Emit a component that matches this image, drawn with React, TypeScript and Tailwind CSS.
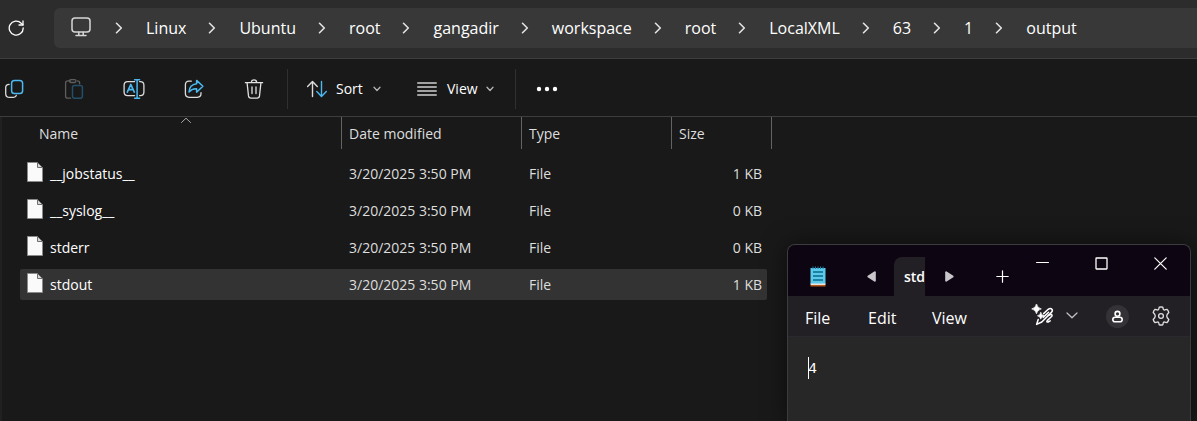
import React from "react";

const crumbs = ["Linux", "Ubuntu", "root", "gangadir", "workspace", "root", "LocalXML", "63", "1", "output"];

const files = [
  { name: "__jobstatus__", date: "3/20/2025 3:50 PM", type: "File", size: "1 KB", selected: false },
  { name: "__syslog__", date: "3/20/2025 3:50 PM", type: "File", size: "0 KB", selected: false },
  { name: "stderr", date: "3/20/2025 3:50 PM", type: "File", size: "0 KB", selected: false },
  { name: "stdout", date: "3/20/2025 3:50 PM", type: "File", size: "1 KB", selected: true },
];

type IconProps = { w: number; h: number; className?: string; sw?: number; children: React.ReactNode };

function Icon({ w, h, className = "", sw = 1.3, children }: IconProps) {
  return (
    <svg
      width={w}
      height={h}
      viewBox={`0 0 ${w} ${h}`}
      fill="none"
      stroke="currentColor"
      strokeWidth={sw}
      strokeLinecap="round"
      strokeLinejoin="round"
      className={`shrink-0 ${className}`}
      aria-hidden="true"
    >
      {children}
    </svg>
  );
}

const BLUE = "#4cb8f0";

function RefreshIcon() {
  return (
    <Icon w={18} h={18} className="text-white" sw={1.3}>
      <path d="M15.2 9A7 7 0 1 1 13.2 4.2L15 5.9" />
      <path d="M15 2V6H11" />
    </Icon>
  );
}

function MonitorIcon() {
  return (
    <Icon w={20} h={20} className="text-[#d6d6d6]" sw={1.5}>
      <rect x="1" y="1" width="18" height="14" rx="3" />
      <path d="M7.8 15.2v3M12.2 15.2v3M5 18.4h10" />
    </Icon>
  );
}

function ChevronRight() {
  return (
    <Icon w={8} h={12} className="text-[#e4e4e4]" sw={1.6}>
      <path d="M1.5 1.3L6.3 6L1.5 10.7" />
    </Icon>
  );
}

function ChevronDown() {
  return (
    <Icon w={8} h={6} className="text-[#b5b5b5]" sw={1.3}>
      <path d="M1 1.3L4 4.5L7 1.3" />
    </Icon>
  );
}

function CopyIcon() {
  return (
    <Icon w={20} h={20}>
      <path d="M5.2 5.3C3 5.3 1.7 6.2 1.7 8.6V14.4C1.7 17 3.1 18.4 5.7 18.4H9C11 18.4 11.9 17.8 12.3 16.4" stroke="#dcdcdc" />
      <rect x="7.6" y="1.4" width="11" height="13.2" rx="2.8" stroke={BLUE} strokeWidth="1.5" />
    </Icon>
  );
}

function PasteIcon() {
  return (
    <Icon w={20} h={20}>
      <path d="M6.5 1.9H3.7C2.3 1.9 1.6 2.7 1.6 4V17.2C1.6 18.5 2.3 19.2 3.7 19.2H6.6M13.5 1.9C14.9 1.9 15.6 2.6 15.6 4V4.8" stroke="#5d5d5d" />
      <rect x="5.4" y="0.7" width="6.6" height="2.8" rx="1.4" stroke="#5d5d5d" />
      <rect x="8.5" y="6.6" width="9.9" height="12.7" rx="2" stroke="#235069" strokeWidth="1.5" />
    </Icon>
  );
}

function RenameIcon() {
  return (
    <Icon w={22} h={20}>
      <path d="M11.6 2.6H4.7C2.4 2.6 1.1 3.9 1.1 6.2V13C1.1 15.3 2.4 16.6 4.7 16.6H11.6M16.6 2.6H17.3C19.6 2.6 20.9 3.9 20.9 6.2V13C20.9 15.3 19.6 16.6 17.3 16.6H16.6" stroke="#dcdcdc" />
      <path d="M4.3 13.1L7.8 5.4L11.3 13.1M5.6 10.6H10" stroke={BLUE} strokeWidth="1.6" />
      <path d="M14.1 0.9V19.1M11.6 0.8H16.6M11.6 19.2H16.6" stroke={BLUE} strokeWidth="1.5" />
    </Icon>
  );
}

function ShareIcon() {
  return (
    <Icon w={20} h={20}>
      <path d="M7.3 2.2H5C2.6 2.2 1.4 3.5 1.4 5.8V14.6C1.4 17 2.6 18.3 5 18.3H13.4C15.8 18.3 17 17 17 14.6V13.6" stroke="#dcdcdc" />
      <path d="M12.6 1.4L18.9 7.3L12.6 13.1V9.8C9.3 9.6 7 10.5 5 13C5.2 8.4 7.9 5.2 12.6 4.7Z" stroke={BLUE} strokeWidth="1.5" />
    </Icon>
  );
}

function TrashIcon() {
  return (
    <Icon w={20} h={20} className="text-[#e2e2e2]">
      <path d="M1.4 3.7H18.6M7.4 3.4C7.4 1.7 8.4 0.9 10 0.9S12.6 1.7 12.6 3.4M3.1 4L4.5 16.9C4.7 18.4 5.4 19.1 6.9 19.1H13.1C14.6 19.1 15.3 18.4 15.5 16.9L16.9 4M8 8V14.6M12 8V14.6" />
    </Icon>
  );
}

function SortIcon() {
  return (
    <Icon w={22} h={18} sw={1.4}>
      <path d="M6.5 16.6V1.6M1.6 6.4L6.5 1.5L11.3 6.4" stroke="#dcdcdc" />
      <path d="M15.5 1.4V16.4M10.8 11.6L15.5 16.5L20.3 11.6" stroke={BLUE} />
    </Icon>
  );
}

function LinesIcon() {
  return (
    <Icon w={20} h={14} className="text-[#d0d0d0]">
      <path d="M0.7 1H19.3M0.7 5H19.3M0.7 9H19.3M0.7 13H19.3" />
    </Icon>
  );
}

function FileIcon() {
  return (
    <svg width="16" height="20" viewBox="0 0 16 20" className="mb-[3px] shrink-0" aria-hidden="true">
      <path d="M0.5 0.5H10.5L15.5 5.5V19.5H0.5Z" fill="#fafafa" stroke="#8a8a8a" />
      <path d="M10.5 0.5V5.5H15.5Z" fill="#d8d8d8" stroke="#6f6f6f" />
    </svg>
  );
}

function NotepadIcon() {
  return (
    <svg width="16" height="21" viewBox="0 0 16 21" className="shrink-0" aria-hidden="true">
      <path d="M0.5 2H15.5V18H0.5Z" fill="#5cc8ea" />
      <path d="M0.5 17.5H15.5V19H0.5Z" fill="#e9e4de" />
      <path d="M0.5 19H15.5V20.5H0.5Z" fill="#b4581a" />
      <path d="M3 0.5V3M5.5 0.5V3M8 0.5V3M10.5 0.5V3M13 0.5V3" stroke="#1b7fa6" strokeWidth="1" />
      <path d="M3 6H13M3 10H13M3 14H13" stroke="#08698c" strokeWidth="1.6" />
    </svg>
  );
}

function RewriteIcon() {
  return (
    <Icon w={24} h={24} className="text-white" sw={1.5}>
      <path d="M5.5 0Q6.2 4.1 10.3 4.9Q6.2 5.7 5.5 9.8Q4.8 5.7 0.7 4.9Q4.8 4.1 5.5 0Z" fill="currentColor" stroke="currentColor" strokeWidth="0.7" />
      <path d="M9.8 8.4Q10.3 11.2 13.2 11.8Q10.3 12.4 9.8 15.2Q9.3 12.4 6.4 11.8Q9.3 11.2 9.8 8.4Z" fill="currentColor" stroke="currentColor" strokeWidth="0.6" />
      <path d="M12.6 9.6L17.2 5.3C18.6 4.2 20.2 4.3 20.9 5.2C21.7 6.2 21.4 7.4 20.4 8.4L10.8 18L5.6 20.4L7.2 15.4" />
      <path d="M12.2 13.4L17.6 8.2M17.2 11.5L19.6 10.6C21 10.3 21.6 11.4 20.6 12.5L16.2 16.6C15.4 17.6 16 18.4 17.2 18L19.2 16.9" />
    </Icon>
  );
}

function GearIcon() {
  return (
    <Icon w={20} h={20} className="text-[#dedede]" sw={1.3}>
      <path d="M8.2 1.2Q10 0.8 11.8 1.2L12.3 3.3Q12.7 4.2 13.8 3.9L15.9 3.3Q17.3 4.6 17.8 6.5L16.3 8.2Q15.2 10 16.3 11.8L17.8 13.5Q17.3 15.4 15.9 16.7L13.8 16.1Q12.7 15.8 12.3 16.7L11.8 18.8Q10 19.2 8.2 18.8L7.7 16.7Q7.3 15.8 6.2 16.1L4.1 16.7Q2.7 15.4 2.2 13.5L3.7 11.8Q4.8 10 3.7 8.2L2.2 6.5Q2.7 4.6 4.1 3.3L6.2 3.9Q7.3 4.2 7.7 3.3Z" />
      <circle cx="10" cy="10" r="2.4" />
    </Icon>
  );
}

function AddressBar() {
  return (
    <header className="flex h-[59px] items-start border-b border-[#3d3d3d] bg-[#2c2c2c] pt-2">
      <button aria-label="Refresh" className="flex h-10 w-[54px] items-center pl-2">
        <RefreshIcon />
      </button>
      <nav aria-label="Path" className="flex h-10 flex-1 items-center rounded-l-md bg-[#383838] pl-[17px]">
        <button aria-label="This PC" className="mb-[2px]">
          <MonitorIcon />
        </button>
        <ol className="flex items-center pl-[2px]">
          {crumbs.map((c, i) => (
            <li key={i} className="flex items-center">
              <span className="pr-[23px] pl-[22px]">
                <ChevronRight />
              </span>
              <a href="#" className="text-base leading-6 text-white">
                {c}
              </a>
            </li>
          ))}
        </ol>
      </nav>
    </header>
  );
}

function CommandBar() {
  const tools = [
    { label: "Copy", icon: <CopyIcon /> },
    { label: "Paste", icon: <PasteIcon /> },
    { label: "Rename", icon: <RenameIcon /> },
    { label: "Share", icon: <ShareIcon /> },
    { label: "Delete", icon: <TrashIcon /> },
  ];
  return (
    <div role="toolbar" aria-label="Commands" className="flex h-[58px] items-center border-b border-[#3d3d3d] pt-[3px] text-sm text-white">
      <div className="flex gap-8">
        {tools.map((t) => (
          <button key={t.label} aria-label={t.label} className="flex h-8 w-7 items-center justify-center">
            {t.icon}
          </button>
        ))}
      </div>
      <div className="ml-[19px] h-10 w-px bg-[#303030]" />
      <button className="ml-[18px] flex w-[75px] items-center">
        <SortIcon />
        <span className="ml-2 flex-1 text-left">Sort</span>
        <ChevronDown />
      </button>
      <button className="ml-9 flex w-[77px] items-center">
        <LinesIcon />
        <span className="ml-[10px] flex-1 text-left">View</span>
        <ChevronDown />
      </button>
      <div className="ml-[21px] h-10 w-px bg-[#303030]" />
      <button aria-label="See more" className="ml-5">
        <svg width="22" height="6" viewBox="0 0 22 6" fill="#fff" aria-hidden="true">
          <circle cx="3" cy="3" r="2.2" />
          <circle cx="11" cy="3" r="2.2" />
          <circle cx="19" cy="3" r="2.2" />
        </svg>
      </button>
    </div>
  );
}

function FileTable() {
  const head = "flex h-8 items-center border-r border-[#636363] pt-px font-normal";
  const cell = "flex h-[31px] items-center";
  return (
    <table className="w-[772px] table-fixed border-collapse text-left text-sm text-[#dedede]">
      <colgroup>
        <col className="w-[342px]" />
        <col className="w-[180px]" />
        <col className="w-[150px]" />
        <col className="w-[100px]" />
      </colgroup>
      <thead>
        <tr className="h-[38px] align-top">
          <th className="relative p-0">
            <div className={`${head} pl-[39px]`}>Name</div>
            <Icon w={12} h={7} className="absolute top-0 left-[180px] text-[#a8a8a8]" sw={1}>
              <path d="M1.5 5.5L6 1.2L10.5 5.5" />
            </Icon>
          </th>
          <th className="p-0">
            <div className={`${head} pl-[7px]`}>Date modified</div>
          </th>
          <th className="p-0">
            <div className={`${head} pl-[7px]`}>Type</div>
          </th>
          <th className="p-0">
            <div className={`${head} pl-[7px]`}>Size</div>
          </th>
        </tr>
      </thead>
      <tbody>
        {files.map((f) => {
          const bg = f.selected ? "bg-[#333333]" : "";
          return (
            <tr key={f.name} className="h-[37px]">
              <td className="p-0 pl-5">
                <div className={`${cell} ${bg} gap-[7px] rounded-l-xs pl-[7px] text-white`}>
                  <FileIcon />
                  {f.name}
                </div>
              </td>
              <td className="p-0">
                <div className={`${cell} ${bg} pl-[7px]`}>{f.date}</div>
              </td>
              <td className="p-0">
                <div className={`${cell} ${bg} pl-[7px]`}>{f.type}</div>
              </td>
              <td className="p-0 pr-[5px]">
                <div className={`${cell} ${bg} justify-end rounded-r-xs pr-[5px]`}>{f.size}</div>
              </td>
            </tr>
          );
        })}
      </tbody>
    </table>
  );
}

function Notepad() {
  const winButton = "flex h-9 w-[59px] items-center justify-center";
  return (
    <section
      aria-label="Notepad"
      className="absolute top-[244px] right-1.5 bottom-0 flex w-[404px] flex-col overflow-hidden rounded-t-lg border border-b-0 border-[#3c3c3e] bg-[#272727] text-white shadow-[0_0_24px_rgba(0,0,0,0.5)]"
    >
      <div className="flex h-[51px] bg-[#0d0512]">
        <div className="flex w-[60px] items-center pt-3 pl-[22px]">
          <NotepadIcon />
        </div>
        <button aria-label="Previous tab" className="flex w-[46px] items-center justify-center pt-3">
          <svg width="9" height="11" viewBox="0 0 9 11" fill="#c9c6cb" aria-hidden="true">
            <path d="M8.8 1.2V9.8Q8.6 11 7.3 10.6L0.7 6.2Q0 5.5 0.7 4.8L7.3 0.4Q8.6 0 8.8 1.2Z" />
          </svg>
        </button>
        <button className="mt-3 w-[31px] overflow-hidden rounded-tl-lg bg-[#221f25] pl-[10px] text-left text-sm font-semibold whitespace-nowrap">
          std
        </button>
        <button aria-label="Next tab" className="flex w-12 items-center justify-center pt-3">
          <svg width="9" height="11" viewBox="0 0 9 11" fill="#c9c6cb" aria-hidden="true">
            <path d="M0.2 1.2V9.8Q0.4 11 1.7 10.6L8.3 6.2Q9 5.5 8.3 4.8L1.7 0.4Q0.4 0 0.2 1.2Z" />
          </svg>
        </button>
        <button aria-label="New tab" className="ml-[18px] flex w-[22px] items-center justify-center pt-3">
          <Icon w={13} h={13} sw={1.2}>
            <path d="M6.5 0.8V12.2M0.8 6.5H12.2" />
          </Icon>
        </button>
        <div className="ml-auto flex">
          <button aria-label="Minimize" className={winButton}>
            <Icon w={13} h={13} sw={1}>
              <path d="M0.5 5.5H12.5" />
            </Icon>
          </button>
          <button aria-label="Maximize" className={winButton}>
            <Icon w={13} h={13} sw={1.3}>
              <rect x="1" y="1" width="11" height="11" rx="0.5" />
            </Icon>
          </button>
          <button aria-label="Close" className={winButton}>
            <Icon w={13} h={13} sw={1.2}>
              <path d="M0.8 0.8L12.2 12.2M12.2 0.8L0.8 12.2" />
            </Icon>
          </button>
        </div>
      </div>
      <div className="flex h-[41px] items-center border-b border-[#2b2830] bg-[#221f25] pl-[17px] text-base">
        <button className="w-[63px] pt-1 text-left">File</button>
        <button className="w-16 pt-1 text-left">Edit</button>
        <button className="pt-1 text-left">View</button>
        <div className="ml-auto flex items-center pr-[19px]">
          <button aria-label="Rewrite">
            <RewriteIcon />
          </button>
          <button aria-label="Rewrite options" className="ml-[11px]">
            <Icon w={12} h={8} className="text-[#c4c4c4]" sw={1.2}>
              <path d="M1 1L6 5.8L11 1" />
            </Icon>
          </button>
          <button aria-label="Account" className="ml-7 flex size-[23px] items-center justify-center rounded-full bg-[#343137]">
            <Icon w={13} h={13} sw={1.6}>
              <circle cx="6.5" cy="3.8" r="2.4" />
              <rect x="1.8" y="7.2" width="9.4" height="4.6" rx="2.3" />
            </Icon>
          </button>
          <button aria-label="Settings" className="ml-[22px]">
            <GearIcon />
          </button>
        </div>
      </div>
      <div className="relative flex flex-1">
        <textarea
          aria-label="Document text"
          defaultValue="4"
          spellCheck={false}
          className="flex-1 resize-none bg-transparent px-5 pt-[21px] font-['Liberation_Mono',monospace] text-[15px] leading-6 outline-none"
        />
        <span className="absolute top-5 left-5 h-[22px] w-px bg-white" />
      </div>
    </section>
  );
}

export default function App() {
  return (
    <div className="relative flex min-h-screen flex-col overflow-hidden bg-[#191919] font-['Open_Sans',sans-serif]">
      <AddressBar />
      <CommandBar />
      <main className="relative flex-1">
        <div className="absolute inset-y-0 left-0 w-0.5 bg-[#212121]" />
        <FileTable />
      </main>
      <Notepad />
    </div>
  );
}
